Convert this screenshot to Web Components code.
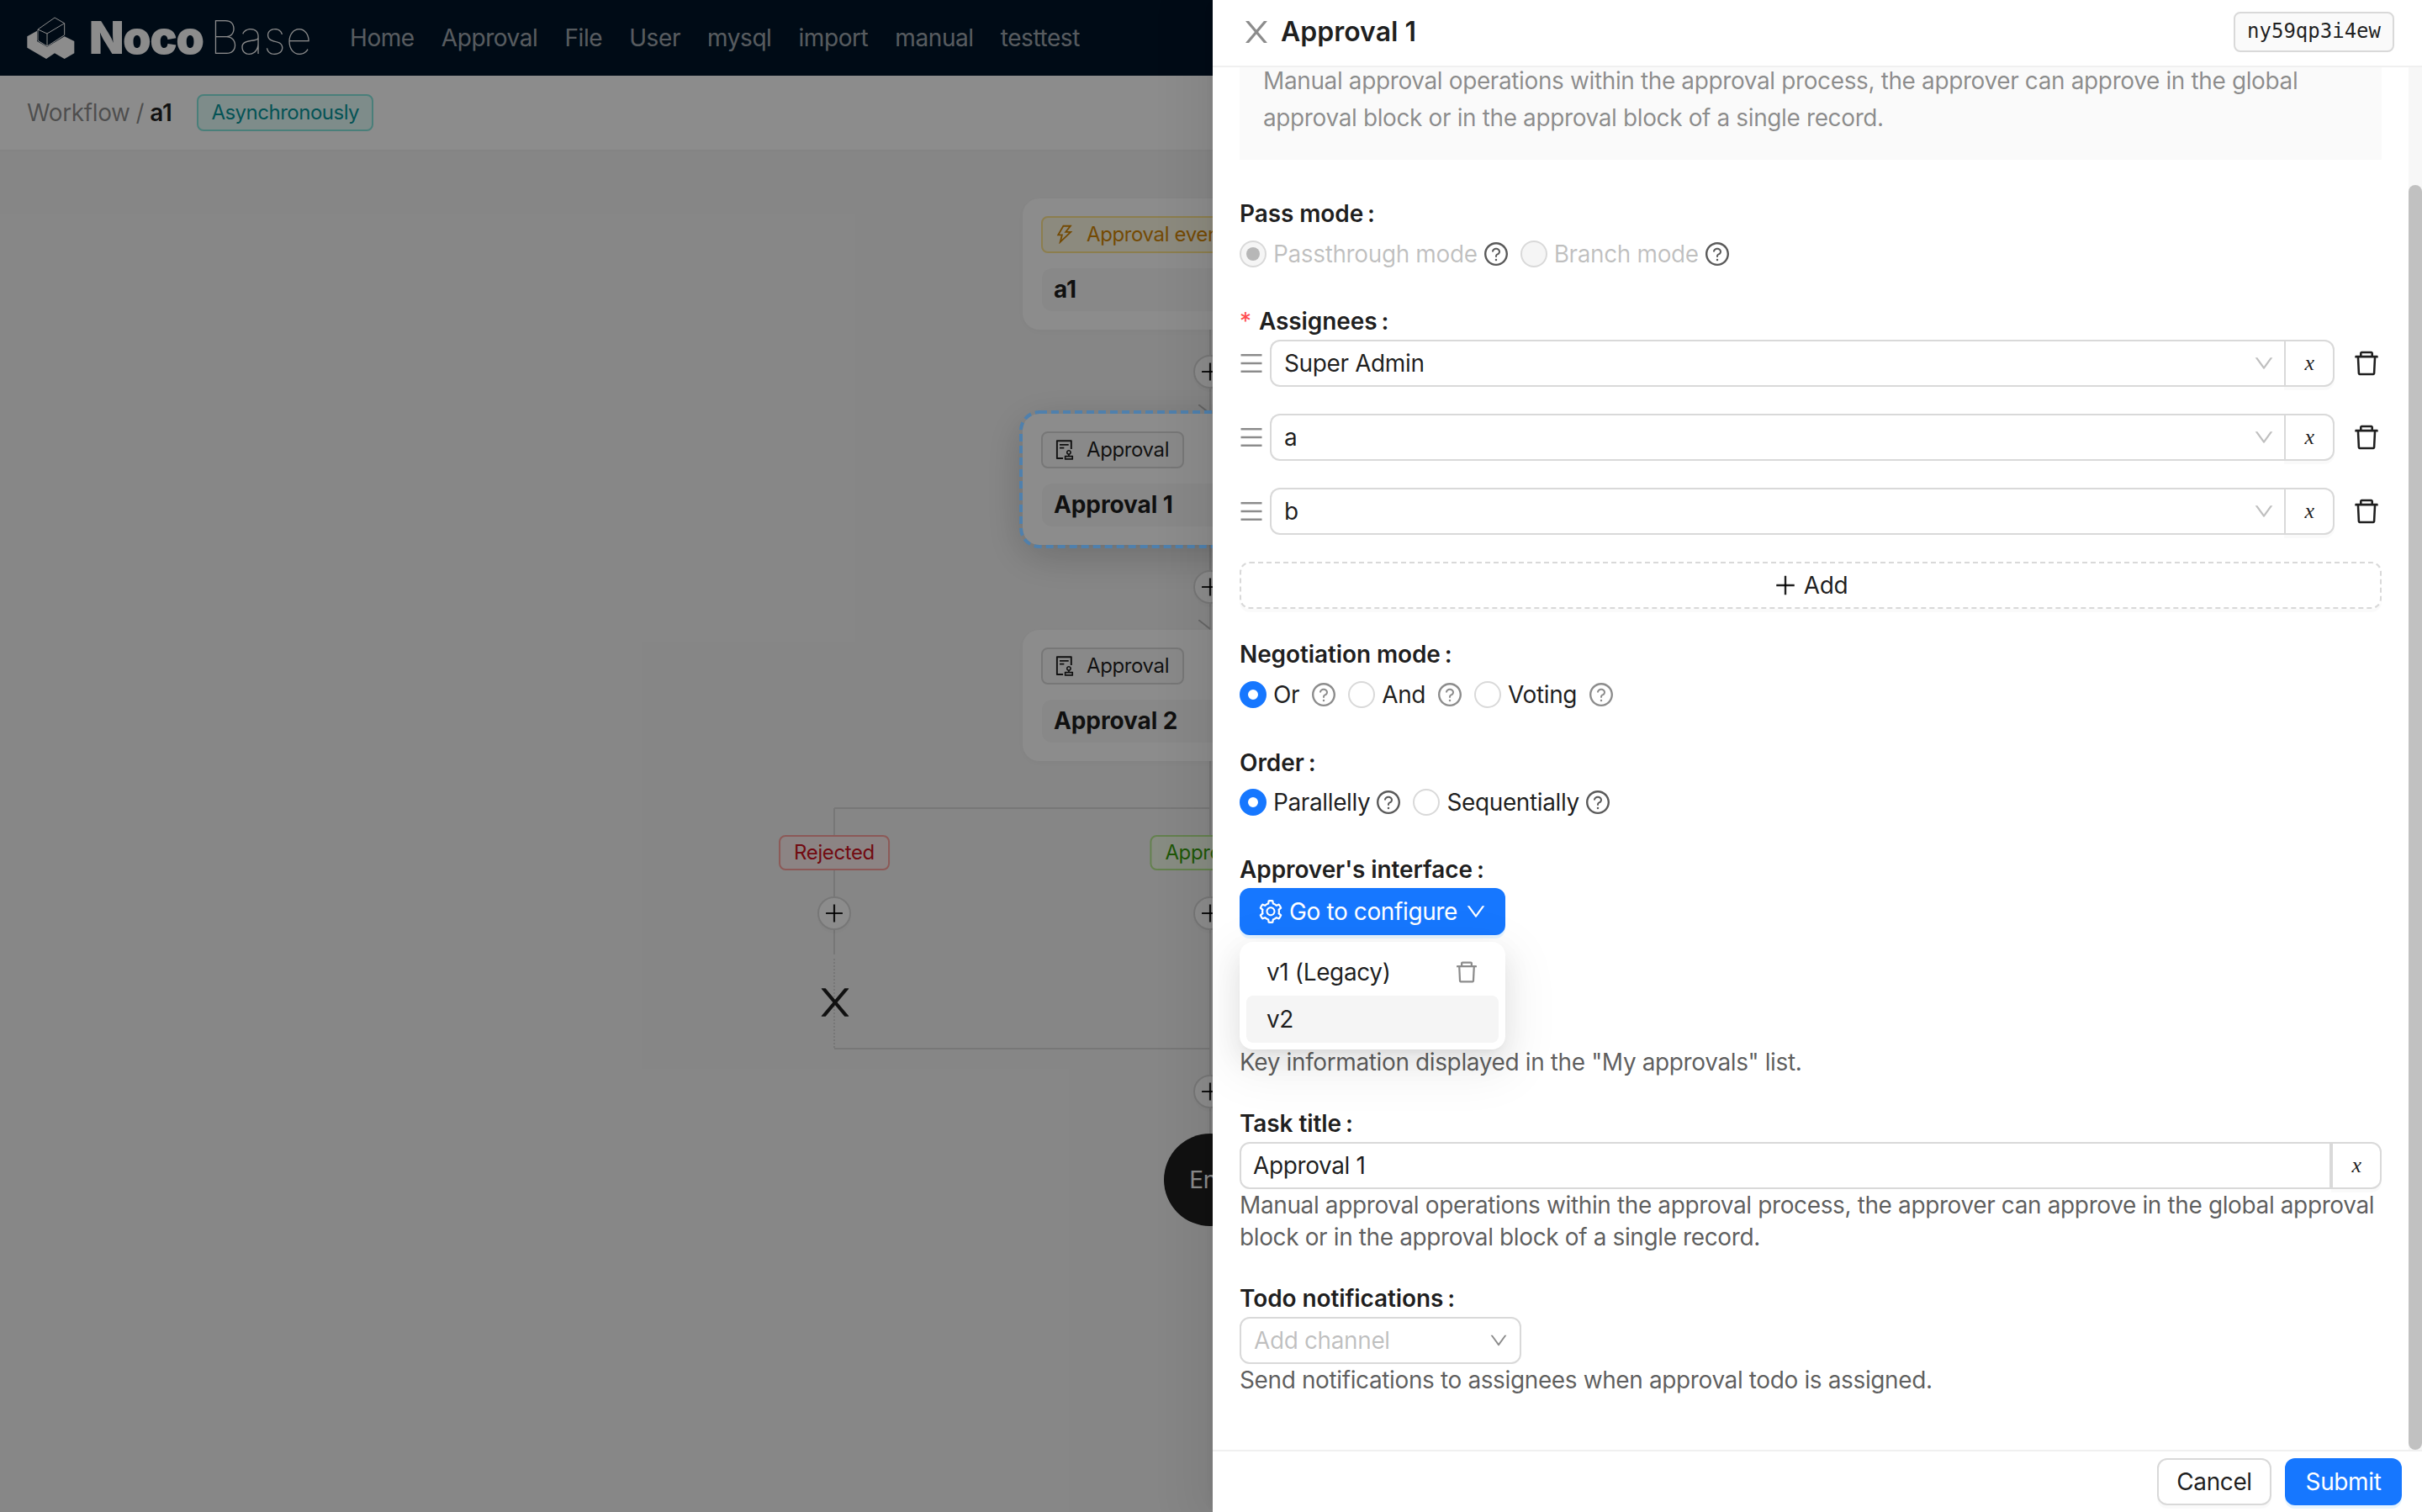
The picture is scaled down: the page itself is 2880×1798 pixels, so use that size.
<!doctype html>
<html lang="en">
<head>
<meta charset="utf-8">
<title>NocoBase workflow</title>
<style>
  html, body { margin: 0; height: 100%; overflow: hidden; background: #f5f5f5; }
  body { font: 28px/44px Inter, "Liberation Sans", sans-serif; color: rgba(0,0,0,.88); }
</style>
</head>
<body>

<nb-app>
  <nb-topbar slot="top">
    <nb-menu-item>Home</nb-menu-item>
    <nb-menu-item>Approval</nb-menu-item>
    <nb-menu-item>File</nb-menu-item>
    <nb-menu-item>User</nb-menu-item>
    <nb-menu-item>mysql</nb-menu-item>
    <nb-menu-item>import</nb-menu-item>
    <nb-menu-item>manual</nb-menu-item>
    <nb-menu-item>testtest</nb-menu-item>
  </nb-topbar>
  <nb-crumbs slot="top"></nb-crumbs>
  <nb-canvas slot="top"></nb-canvas>

  <nb-drawer slot="drawer" heading="Approval 1" code="ny59qp3i4ew">
    <nb-note>Manual approval operations within the approval process, the approver can approve in the global approval block or in the approval block of a single record.</nb-note>

    <nb-field label="Pass mode" style="margin-top:42px">
      <nb-radio-row style="margin-top:4px">
        <nb-radio state="disabled-on" tip="dark">Passthrough mode</nb-radio>
        <nb-radio state="disabled" tip="dark">Branch mode</nb-radio>
      </nb-radio-row>
    </nb-field>

    <nb-field label="Assignees" required style="margin-top:36px">
      <nb-assignee value="Super Admin"></nb-assignee>
      <nb-assignee value="a" style="margin-top:32px"></nb-assignee>
      <nb-assignee value="b" style="margin-top:32px"></nb-assignee>
      <nb-add-button style="margin-top:32px"></nb-add-button>
    </nb-field>

    <nb-field label="Negotiation mode" style="margin-top:32px">
      <nb-radio-row style="margin-top:4px">
        <nb-radio state="on" tip="light">Or</nb-radio>
        <nb-radio tip="light">And</nb-radio>
        <nb-radio tip="light">Voting</nb-radio>
      </nb-radio-row>
    </nb-field>

    <nb-field label="Order" style="margin-top:37px">
      <nb-radio-row style="margin-top:3px">
        <nb-radio state="on" tip="dark">Parallelly</nb-radio>
        <nb-radio tip="dark">Sequentially</nb-radio>
      </nb-radio-row>
    </nb-field>

    <nb-field label="Approver's interface" style="margin-top:36px">
      <nb-config-dropdown></nb-config-dropdown>
    </nb-field>

    <nb-help style="margin-top:132px">Key information displayed in the "My approvals" list.</nb-help>

    <nb-field label="Task title" style="margin-top:32px">
      <nb-var-input value="Approval 1"></nb-var-input>
      <nb-help>Manual approval operations within the approval process, the approver can approve in the global approval block or in the approval block of a single record.</nb-help>
    </nb-field>

    <nb-field label="Todo notifications" style="margin-top:32px">
      <nb-channel-select></nb-channel-select>
      <nb-help>Send notifications to assignees when approval todo is assigned.</nb-help>
    </nb-field>
  </nb-drawer>
</nb-app>

<script>
const ICONS = {
  close: '<path d="M563.8 512l262.5-312.9c4.4-5.2.7-13.1-6.1-13.1h-79.8c-4.7 0-9.2 2.1-12.3 5.7L511.6 449.8 295.1 191.7c-3-3.6-7.5-5.7-12.3-5.7H203c-6.8 0-10.5 7.9-6.1 13.1L459.4 512 196.9 824.9A7.95 7.95 0 0 0 203 838h79.8c4.7 0 9.2-2.1 12.3-5.7l216.5-258.1 216.5 258.1c3 3.6 7.5 5.7 12.3 5.7h79.8c6.8 0 10.5-7.9 6.1-13.1L563.8 512z"/>',
  down: '<path d="M884 256h-75c-5.1 0-9.9 2.5-12.9 6.6L512 654.2 227.9 262.6c-3-4.1-7.8-6.6-12.9-6.6h-75c-6.5 0-10.3 7.4-6.5 12.7l352.6 486.1c12.8 17.6 39 17.6 51.7 0l352.6-486.1c3.9-5.3.1-12.7-6.4-12.7z"/>',
  trash: '<path d="M360 184h-8c4.4 0 8-3.6 8-8v8h304v-8c0 4.4 3.6 8 8 8h-8v72h72v-80c0-35.3-28.7-64-64-64H352c-35.3 0-64 28.7-64 64v80h72v-72zm504 72H160c-17.7 0-32 14.3-32 32v32c0 4.4 3.6 8 8 8h60.4l24.7 523c1.6 34.1 29.8 61 63.9 61h454c34.2 0 62.3-26.8 63.9-61l24.7-523H888c4.4 0 8-3.6 8-8v-32c0-17.7-14.3-32-32-32zM731.3 840H292.7l-24.2-512h487l-24.2 512z"/>',
  plus: '<path d="M482 152h60q8 0 8 8v704q0 8-8 8h-60q-8 0-8-8V160q0-8 8-8z"/><path d="M176 474h672q8 0 8 8v60q0 8-8 8H176q-8 0-8-8v-60q0-8 8-8z"/>',
  menu: '<path d="M904 160H120c-4.4 0-8 3.6-8 8v64c0 4.4 3.6 8 8 8h784c4.4 0 8-3.6 8-8v-64c0-4.4-3.6-8-8-8zm0 624H120c-4.4 0-8 3.6-8 8v64c0 4.4 3.6 8 8 8h784c4.4 0 8-3.6 8-8v-64c0-4.4-3.6-8-8-8zm0-312H120c-4.4 0-8 3.6-8 8v64c0 4.4 3.6 8 8 8h784c4.4 0 8-3.6 8-8v-64c0-4.4-3.6-8-8-8z"/>',
  question: '<path d="M512 64C264.6 64 64 264.6 64 512s200.6 448 448 448 448-200.6 448-448S759.4 64 512 64zm0 820c-205.4 0-372-166.6-372-372s166.6-372 372-372 372 166.6 372 372-166.6 372-372 372z"/><path d="M623.6 316.7C593.6 290.4 554 276 512 276s-81.6 14.5-111.6 40.7C369.2 344 352 380.7 352 420v7.6c0 4.4 3.6 8 8 8h48c4.4 0 8-3.6 8-8V420c0-44.1 43.1-80 96-80s96 35.9 96 80c0 31.1-22 59.6-56.1 72.7-21.2 8.1-39.2 22.3-52.1 40.9-13.1 19-19.9 41.8-19.9 64.9V620c0 4.4 3.6 8 8 8h48c4.4 0 8-3.6 8-8v-22.7a48.3 48.3 0 0 1 30.9-44.8c59-22.7 97.1-74.7 97.1-132.5.1-39.3-17.1-76-48.3-103.3zM472 732a40 40 0 1 0 80 0 40 40 0 1 0-80 0z"/>',
  setting: '<path d="M924.8 625.7l-65.5-56c3.1-19 4.7-38.4 4.7-57.8s-1.6-38.8-4.7-57.8l65.5-56a32.03 32.03 0 0 0 9.3-35.2l-.9-2.6a443.74 443.74 0 0 0-79.7-137.9l-1.8-2.1a32.12 32.12 0 0 0-35.1-9.5l-81.3 28.9c-30-24.6-63.5-44-99.7-57.6l-15.7-85a32.05 32.05 0 0 0-25.8-25.7l-2.7-.5c-52.1-9.4-106.9-9.4-159 0l-2.7.5a32.05 32.05 0 0 0-25.8 25.7l-15.8 85.4a351.86 351.86 0 0 0-99 57.4l-81.9-29.1a32 32 0 0 0-35.1 9.5l-1.8 2.1a446.02 446.02 0 0 0-79.7 137.9l-.9 2.6c-4.5 12.5-.8 26.5 9.3 35.2l66.3 56.6c-3.1 18.8-4.6 38-4.6 57.1 0 19.2 1.5 38.4 4.6 57.1L99 625.5a32.03 32.03 0 0 0-9.3 35.2l.9 2.6c18.1 50.4 44.9 96.9 79.7 137.9l1.8 2.1a32.12 32.12 0 0 0 35.1 9.5l81.9-29.1c29.8 24.5 63.1 43.9 99 57.4l15.8 85.4a32.05 32.05 0 0 0 25.8 25.7l2.7.5a449.4 449.4 0 0 0 159 0l2.7-.5a32.05 32.05 0 0 0 25.8-25.7l15.7-85a350 350 0 0 0 99.7-57.6l81.3 28.9a32 32 0 0 0 35.1-9.5l1.8-2.1c34.8-41.1 61.6-87.5 79.7-137.9l.9-2.6c4.5-12.3.8-26.3-9.3-35zM788.3 465.9c2.5 15.1 3.8 30.6 3.8 46.1s-1.3 31-3.8 46.1l-6.6 40.1 74.7 63.9a370.03 370.03 0 0 1-42.6 73.6L721 702.8l-31.4 25.8c-23.9 19.6-50.5 35-79.3 45.8l-38.1 14.3-17.9 97a377.5 377.5 0 0 1-85 0l-17.9-97.2-37.8-14.5c-28.5-10.8-55-26.2-78.7-45.7l-31.4-25.9-93.4 33.2c-17-22.9-31.2-47.6-42.6-73.6l75.5-64.5-6.5-40c-2.4-14.9-3.7-30.3-3.7-45.5 0-15.3 1.2-30.6 3.7-45.5l6.5-40-75.5-64.5c11.3-26.1 25.6-50.7 42.6-73.6l93.4 33.2 31.4-25.9c23.7-19.5 50.2-34.9 78.7-45.7l37.9-14.3 17.9-97.2c28.1-3.2 56.8-3.2 85 0l17.9 97 38.1 14.3c28.7 10.8 55.4 26.2 79.3 45.8l31.4 25.8 92.8-32.9c17 22.9 31.2 47.6 42.6 73.6L781.8 426l6.5 39.9zM512 326c-97.2 0-176 78.8-176 176s78.8 176 176 176 176-78.8 176-176-78.8-176-176-176zm79.2 255.2A111.6 111.6 0 0 1 512 614c-29.9 0-58-11.7-79.2-32.8A111.6 111.6 0 0 1 400 502c0-29.9 11.7-58 32.8-79.2C454 401.6 482.1 390 512 390c29.9 0 58 11.6 79.2 32.8A111.6 111.6 0 0 1 624 502c0 29.9-11.7 58-32.8 79.2z"/>',
  thunder: '<path d="M848 359.3H627.7L825.8 109c4.1-5.3.4-13-6.3-13H436c-2.8 0-5.5 1.5-6.9 4L170 547.5c-3.1 5.3.7 12 6.9 12h174.4l-89.4 357.6c-1.9 7.8 7.5 13.3 13.3 7.7L853.5 373c5.2-4.9 1.7-13.7-5.5-13.7zM378.2 732.5l60.3-241H281.1l189.6-327.4h224.6L487 427.4h211L378.2 732.5z"/>',
  audit: '<path d="M296 250c-4.4 0-8 3.6-8 8v48c0 4.4 3.6 8 8 8h384c4.4 0 8-3.6 8-8v-48c0-4.4-3.6-8-8-8H296zm184 144H296c-4.4 0-8 3.6-8 8v48c0 4.4 3.6 8 8 8h184c4.4 0 8-3.6 8-8v-48c0-4.4-3.6-8-8-8zm-48 458H208V148h560v320c0 4.4 3.6 8 8 8h56c4.4 0 8-3.6 8-8V108c0-17.7-14.3-32-32-32H168c-17.7 0-32 14.3-32 32v784c0 17.7 14.3 32 32 32h264c4.4 0 8-3.6 8-8v-56c0-4.4-3.6-8-8-8zm440-88H728v-36.6c46.3-13.8 80-56.6 80-107.4 0-61.9-50.1-112-112-112s-112 50.1-112 112c0 50.7 33.7 93.6 80 107.4V764H520c-8.8 0-16 7.2-16 16v152c0 8.8 7.2 16 16 16h352c8.8 0 16-7.2 16-16V780c0-8.8-7.2-16-16-16zM646 620c0-27.6 22.4-50 50-50s50 22.4 50 50-22.4 50-50 50-50-22.4-50-50zm180 266H566v-60h260v60z"/>'
};

// every element gets the same small setup
class Base extends HTMLElement {
  constructor() {
    super();
    this.attachShadow({ mode: "open" });
  }
  render(css, html) {
    this.shadowRoot.innerHTML = `<style>:host,*,*::before,*::after{box-sizing:border-box}${css}</style>${html}`;
  }
}

class NbIcon extends Base {
  connectedCallback() {
    const size = this.getAttribute("size") || 28;
    this.render(
      `:host{display:inline-flex;flex:none;width:${size}px;height:${size}px}svg{display:block;width:100%;height:100%;fill:currentColor}`,
      `<svg viewBox="64 64 896 896" aria-hidden="true">${ICONS[this.getAttribute("name")]}</svg>`
    );
  }
}

class NbApp extends Base {
  connectedCallback() {
    this.render(`
      :host{display:block;position:relative;width:100%;height:100vh;overflow:hidden;letter-spacing:-.38px}
      .page{display:flex;flex-direction:column;height:100%}
      .mask{position:absolute;inset:0;background:rgba(0,0,0,.45);z-index:10}
      ::slotted([slot=drawer]){position:absolute;top:0;right:0;bottom:0;width:1438px;z-index:20}
    `, `
      <div class="page"><slot name="top"></slot></div>
      <div class="mask"></div>
      <slot name="drawer"></slot>
    `);
  }
}

class NbTopbar extends Base {
  connectedCallback() {
    this.render(`
      :host{display:flex;flex:none;align-items:center;height:90px;background:#001529;padding-left:30px}
      .logo{display:flex;align-items:center;width:370px;color:#fff;font-size:54px;line-height:60px;letter-spacing:0}
      svg{width:60px;height:54px;margin-right:16px;flex:none}
      b{font-weight:900;letter-spacing:-1.5px}
      i{font-style:normal;font-weight:100;margin-left:8px;letter-spacing:.3px}
    `, `
      <div class="logo">
        <svg viewBox="30 20 180 160">
          <path fill="#fff" d="M37 95 72 75v37l36 20 62-37 35 17v43l-35 20-35-20-30 20-68-40z"/>
          <path fill="none" stroke="#fff" stroke-width="3" d="M75 70 135 28l35 20-62 37zM75 70v40l33 20V85M108 130l62-40V48"/>
        </svg>
        <b>Noco</b><i>Base</i>
      </div>
      <slot></slot>
    `);
  }
}

class NbMenuItem extends Base {
  connectedCallback() {
    this.render(`:host{display:block;padding:0 16px;color:rgba(255,255,255,.65);font-size:28px;line-height:90px;letter-spacing:-.42px}`, `<slot></slot>`);
  }
}

class NbCrumbs extends Base {
  connectedCallback() {
    this.render(`
      :host{display:flex;flex:none;align-items:center;height:90px;padding:0 32px;background:#fff;border-bottom:2px solid #f0f0f0;color:rgba(0,0,0,.45)}
      b{color:rgba(0,0,0,.88);font-weight:600;margin-left:7px}
      span.sep{margin-left:7px}
      nb-tag{margin-left:30px;padding:0 15px;letter-spacing:-.5px}
    `, `Workflow<span class="sep">/</span><b>a1</b>
      <nb-tag tone="cyan">Asynchronously</nb-tag>`);
  }
}

const TONES = {
  cyan: "background:#e6fffb;border-color:#87e8de;color:#08979c",
  gold: "background:#fffbe6;border-color:#ffe58f;color:#d48806",
  red: "background:#fff1f0;border-color:#ffa39e;color:#cf1322",
  green: "background:#f6ffed;border-color:#b7eb8f;color:#389e0d",
  plain: "background:#fafafa;border-color:#d9d9d9;color:rgba(0,0,0,.88)"
};

class NbTag extends Base {
  connectedCallback() {
    this.render(`
      :host{display:inline-flex;align-items:center;height:44px;padding:0 16px;border:2px solid;border-radius:8px;font-size:24px;line-height:40px;white-space:nowrap;${TONES[this.getAttribute("tone") || "plain"]}}
    `, `<slot></slot>`);
  }
}

class NbNode extends Base {
  connectedCallback() {
    const icon = this.getAttribute("icon");
    const tone = this.getAttribute("tone");
    const selected = this.hasAttribute("selected");
    this.render(`
      :host{position:absolute;left:1216px;width:446px;height:156px;padding:21px 22px;background:#fff;border-radius:20px;box-shadow:0 2px 8px rgba(0,0,0,.04)}
      :host([selected]){box-shadow:0 12px 48px rgba(0,0,0,.2)}
      .sel{position:absolute;left:-4px;top:-4px;z-index:11;overflow:visible}
      .sel rect{fill:none;stroke:#4f80ad;stroke-width:4;stroke-dasharray:9 5}
      nb-tag{gap:14px;padding-left:14px}
      .title{display:flex;align-items:center;height:51px;margin:16px 0 0 1px;padding:0 0 2px 14px;background:rgba(0,0,0,.03);border-radius:12px;font-weight:700;font-size:28px;letter-spacing:-.1px}
    `, `
      ${selected ? '<svg class="sel" width="454" height="164"><rect x="2" y="2" width="450" height="160" rx="22"/></svg>' : ""}
      <nb-tag tone="${tone}"><nb-icon name="${icon}" size="24"></nb-icon>${this.getAttribute("kind")}</nb-tag>
      <div class="title">${this.getAttribute("heading")}</div>
    `);
  }
}

class NbPlus extends Base {
  connectedCallback() {
    this.render(`
      :host{position:absolute;display:flex;align-items:center;justify-content:center;width:40px;height:40px;margin:-20px 0 0 -20px;background:#fff;border:2px solid #d9d9d9;border-radius:50%;box-shadow:0 4px 0 rgba(0,0,0,.02);color:rgba(0,0,0,.88)}
    `, `<nb-icon name="plus" size="26"></nb-icon>`);
  }
}

// the workflow diagram: places on the canvas are the content here
class NbCanvas extends Base {
  connectedCallback() {
    const y = v => v - 180;
    const line = (x, y1, y2, extra = "") =>
      `<div class="v" style="left:${x - 1}px;top:${y(y1)}px;height:${y2 - y1}px;${extra}"></div>`;
    const hline = (x1, x2, top) =>
      `<div class="h" style="left:${x1}px;top:${y(top) - 1}px;width:${x2 - x1}px"></div>`;
    const arrow = top =>
      `<svg class="arrow" style="left:1425px;top:${y(top)}px" width="14" height="12"><path d="M0 0 14 11" stroke="#bbb" stroke-width="2" fill="none"/></svg>`;
    this.render(`
      :host{display:block;position:relative;flex:1;min-height:0;overflow:hidden}
      .v{position:absolute;width:2px;background:#d9d9d9}
      .h{position:absolute;height:2px;background:#d9d9d9}
      .arrow{position:absolute}
      .branch{position:absolute;transform:translateX(-50%)}
      .end{position:absolute;left:1384px;top:${y(1348)}px;width:110px;height:110px;border-radius:50%;background:#1f1f1f;color:#fff;display:flex;align-items:center;justify-content:center}
      .stop{position:absolute;left:970px;top:${y(1169)}px;color:#1f1f1f}
    `, `
      ${line(1439, 392, 492)}${line(1439, 648, 749)}${line(1439, 904, 1348)}
      ${hline(992, 1440, 961)}${hline(992, 1440, 1247)}
      ${line(992, 961, 1135)}${line(992, 1140, 1246, "background:none;border-left:2px dotted #d9d9d9")}
      ${arrow(481)}${arrow(737)}

      <nb-node style="top:${y(236)}px" tone="gold" icon="thunder" kind="Approval event" heading="a1"></nb-node>
      <nb-node style="top:${y(492)}px" selected tone="plain" icon="audit" kind="Approval" heading="Approval 1"></nb-node>
      <nb-node style="top:${y(749)}px" tone="plain" icon="audit" kind="Approval" heading="Approval 2"></nb-node>

      <nb-tag class="branch" tone="red" style="left:992px;top:${y(993)}px;height:42px">Rejected</nb-tag>
      <nb-tag class="branch" tone="green" style="left:1439px;top:${y(993)}px;height:42px">Approved</nb-tag>

      <nb-plus style="left:1439px;top:${y(442)}px"></nb-plus>
      <nb-plus style="left:1439px;top:${y(698)}px"></nb-plus>
      <nb-plus style="left:992px;top:${y(1086)}px"></nb-plus>
      <nb-plus style="left:1439px;top:${y(1086)}px"></nb-plus>
      <nb-plus style="left:1439px;top:${y(1298)}px"></nb-plus>

      <nb-icon class="stop" name="close" size="46"></nb-icon>
      <div class="end">End</div>
    `);
  }
}

class NbDrawer extends Base {
  connectedCallback() {
    this.render(`
      :host{display:flex;flex-direction:column;background:#fff;box-shadow:-12px 0 48px 16px rgba(0,0,0,.06),-6px 0 12px -8px rgba(0,0,0,.1)}
      header{display:flex;flex:none;align-items:center;height:80px;padding:0 33px 2px 34px;border-bottom:2px solid #f0f0f0}
      header nb-icon{color:rgba(0,0,0,.45)}
      h1{flex:1;margin:0 0 0 11px;font-size:32px;font-weight:600;line-height:44px;letter-spacing:0}
      code{height:48px;padding:0 14px;background:#fafafa;border:2px solid #d9d9d9;border-radius:8px;font:24px/42px "DejaVu Sans Mono",monospace;letter-spacing:0}
      .mid{display:flex;flex:1;min-height:0}
      .body{flex:1;min-width:0;padding:0 32px;overflow:hidden}
      .track{flex:none;width:16px;background:#f7f7f7;padding-top:140px}
      .thumb{height:100%;background:#c1c1c1;border-radius:8px}
      footer{display:flex;flex:none;justify-content:flex-end;gap:16px;height:74px;padding:8px 24px 0 0;border-top:2px solid #f0f0f0}
    `, `
      <header>
        <nb-icon name="close" size="36"></nb-icon>
        <h1>${this.getAttribute("heading")}</h1>
        <code>${this.getAttribute("code")}</code>
      </header>
      <div class="mid">
        <div class="body"><slot></slot></div>
        <div class="track"><div class="thumb"></div></div>
      </div>
      <footer>
        <nb-button style="width:136px">Cancel</nb-button>
        <nb-button primary style="width:139px">Submit</nb-button>
      </footer>
    `);
  }
}

class NbNote extends Base {
  connectedCallback() {
    this.render(`
      :host{display:block;margin-top:-6px;padding:0 28px 28px;background:#fafafa;color:rgba(0,0,0,.45);line-height:44px}
    `, `<slot></slot>`);
  }
}

class NbField extends Base {
  connectedCallback() {
    const req = this.hasAttribute("required") ? '<span class="req">*</span>' : "";
    this.render(`
      :host{display:block}
      .label{height:44px;font-weight:600;line-height:44px;white-space:nowrap;letter-spacing:-.1px}
      .req{color:#ff4d4f;margin-right:9px;font-weight:400}
      .colon{margin-left:5px}
    `, `<div class="label">${req}${this.getAttribute("label")}<span class="colon">:</span></div><slot></slot>`);
  }
}

class NbHelp extends Base {
  connectedCallback() {
    this.render(`:host{display:block;color:rgba(0,0,0,.65);line-height:38px}`, `<slot></slot>`);
  }
}

class NbRadioRow extends Base {
  connectedCallback() {
    this.render(`:host{display:flex;align-items:center;height:44px;gap:15px}`, `<slot></slot>`);
  }
}

class NbRadio extends Base {
  connectedCallback() {
    const state = this.getAttribute("state") || "";
    const tip = this.getAttribute("tip");
    this.render(`
      :host{display:inline-flex;align-items:center;white-space:nowrap}
      .dot{width:32px;height:32px;margin-right:8px;border:2px solid #d9d9d9;border-radius:50%;background:#fff;flex:none}
      .on{background:#fff;border:10px solid #1677ff}
      .disabled{background:#f5f5f5}
      .disabled-on{background:#f5f5f5;position:relative}
      .disabled-on::after{content:"";position:absolute;inset:6px;border-radius:50%;background:rgba(0,0,0,.25)}
      .text.disabled-on,.text.disabled{background:none;color:rgba(0,0,0,.25)}
      nb-icon{margin-left:${tip === "light" ? 15 : 8}px;color:${tip === "light" ? "rgba(0,0,0,.45)" : "rgba(0,0,0,.65)"}}
      .text::after{display:none!important}
    `, `
      <span class="dot ${state}"></span>
      <span class="text ${state.startsWith("disabled") ? state : ""}"><slot></slot></span>
      <nb-icon name="question" size="28"></nb-icon>
    `);
  }
}

class NbVarCell extends Base {
  connectedCallback() {
    this.render(`
      :host{display:flex;flex:none;align-items:center;justify-content:center;width:60px;height:100%;margin-left:-2px;border:2px solid #d9d9d9;border-radius:0 12px 12px 0;background:#fff;box-shadow:0 4px 0 rgba(0,0,0,.02);font:italic 26px/1 "Liberation Serif",serif;color:rgba(0,0,0,.88)}
    `, `x`);
  }
}

class NbAssignee extends Base {
  connectedCallback() {
    this.render(`
      :host{display:flex;align-items:center;height:56px}
      .grip{width:36px;color:rgba(0,0,0,.45);display:flex}
      .box{display:flex;flex:1;align-items:center;height:100%;padding:0 14px 0 15px;border:2px solid #d9d9d9;border-right:0;border-radius:12px 0 0 12px;min-width:0}
      .value{flex:1}
      .box nb-icon{color:rgba(0,0,0,.25)}
      .trash{display:flex;width:56px;justify-content:flex-end;padding-right:2px;color:rgba(0,0,0,.88)}
    `, `
      <span class="grip"><nb-icon name="menu" size="28"></nb-icon></span>
      <div class="box"><span class="value">${this.getAttribute("value")}</span><nb-icon name="down" size="24"></nb-icon></div>
      <nb-var-cell></nb-var-cell>
      <span class="trash"><nb-icon name="trash" size="32"></nb-icon></span>
    `);
  }
}

class NbAddButton extends Base {
  connectedCallback() {
    this.render(`
      :host{display:flex;align-items:center;justify-content:center;gap:8px;height:56px;border:2px dashed #d9d9d9;border-radius:12px;box-shadow:0 4px 0 rgba(0,0,0,.02)}
    `, `<nb-icon name="plus" size="28"></nb-icon>Add`);
  }
}

class NbButton extends Base {
  connectedCallback() {
    const primary = this.hasAttribute("primary");
    this.render(`
      :host{display:inline-flex;align-items:center;justify-content:center;height:56px;border-radius:12px;line-height:1;
        ${primary ? "background:#1677ff;color:#fff;box-shadow:0 4px 0 rgba(5,145,255,.1)" : "background:#fff;border:2px solid #d9d9d9;box-shadow:0 4px 0 rgba(0,0,0,.02)"}}
    `, `<slot></slot>`);
  }
}

class NbConfigDropdown extends Base {
  connectedCallback() {
    this.render(`
      :host{display:block;position:relative;height:56px;width:316px}
      .btn{display:flex;align-items:center;justify-content:center;height:56px;background:#1677ff;color:#fff;border-radius:12px;box-shadow:0 4px 0 rgba(5,145,255,.1)}
      .btn nb-icon:first-child{margin-right:8px}
      .btn nb-icon:last-child{margin-left:10px}
      .pop{position:absolute;left:0;top:64px;width:316px;height:128px;padding:8px;background:#fff;border-radius:16px;box-shadow:0 12px 32px rgba(0,0,0,.08),0 6px 12px -8px rgba(0,0,0,.12),0 18px 56px 16px rgba(0,0,0,.05)}
      .item{display:flex;align-items:center;justify-content:space-between;height:56px;padding:0 24px;border-radius:8px}
      .item.hover{background:#f5f5f5}
      .item nb-icon{color:rgba(0,0,0,.45)}
    `, `
      <div class="btn"><nb-icon name="setting" size="28"></nb-icon>Go to configure<nb-icon name="down" size="24"></nb-icon></div>
      <div class="pop">
        <div class="item">v1 (Legacy)<nb-icon name="trash" size="28"></nb-icon></div>
        <div class="item hover">v2</div>
      </div>
    `);
  }
}

class NbVarInput extends Base {
  connectedCallback() {
    this.render(`
      :host{display:flex;height:56px}
      .box{display:flex;flex:1;align-items:center;padding:0 14px;border:2px solid #d9d9d9;border-right:4px solid #d9d9d9;border-radius:12px 0 0 12px}
    `, `<div class="box">${this.getAttribute("value")}</div><nb-var-cell></nb-var-cell>`);
  }
}

class NbChannelSelect extends Base {
  connectedCallback() {
    this.render(`
      :host{display:flex;align-items:center;justify-content:space-between;width:335px;height:56px;padding:0 14px 0 15px;border:2px solid #d9d9d9;border-radius:12px;color:rgba(0,0,0,.25)}
      nb-icon{color:rgba(0,0,0,.45)}
    `, `Add channel<nb-icon name="down" size="22"></nb-icon>`);
  }
}

const elements = {
  "nb-icon": NbIcon, "nb-tag": NbTag, "nb-plus": NbPlus, "nb-node": NbNode,
  "nb-app": NbApp, "nb-topbar": NbTopbar, "nb-menu-item": NbMenuItem, "nb-crumbs": NbCrumbs,
  "nb-canvas": NbCanvas, "nb-drawer": NbDrawer, "nb-note": NbNote, "nb-field": NbField,
  "nb-help": NbHelp, "nb-radio-row": NbRadioRow, "nb-radio": NbRadio, "nb-var-cell": NbVarCell,
  "nb-assignee": NbAssignee, "nb-add-button": NbAddButton, "nb-button": NbButton,
  "nb-config-dropdown": NbConfigDropdown, "nb-var-input": NbVarInput, "nb-channel-select": NbChannelSelect
};
Object.entries(elements).forEach(([name, cls]) => customElements.define(name, cls));
</script>
</body>
</html>
